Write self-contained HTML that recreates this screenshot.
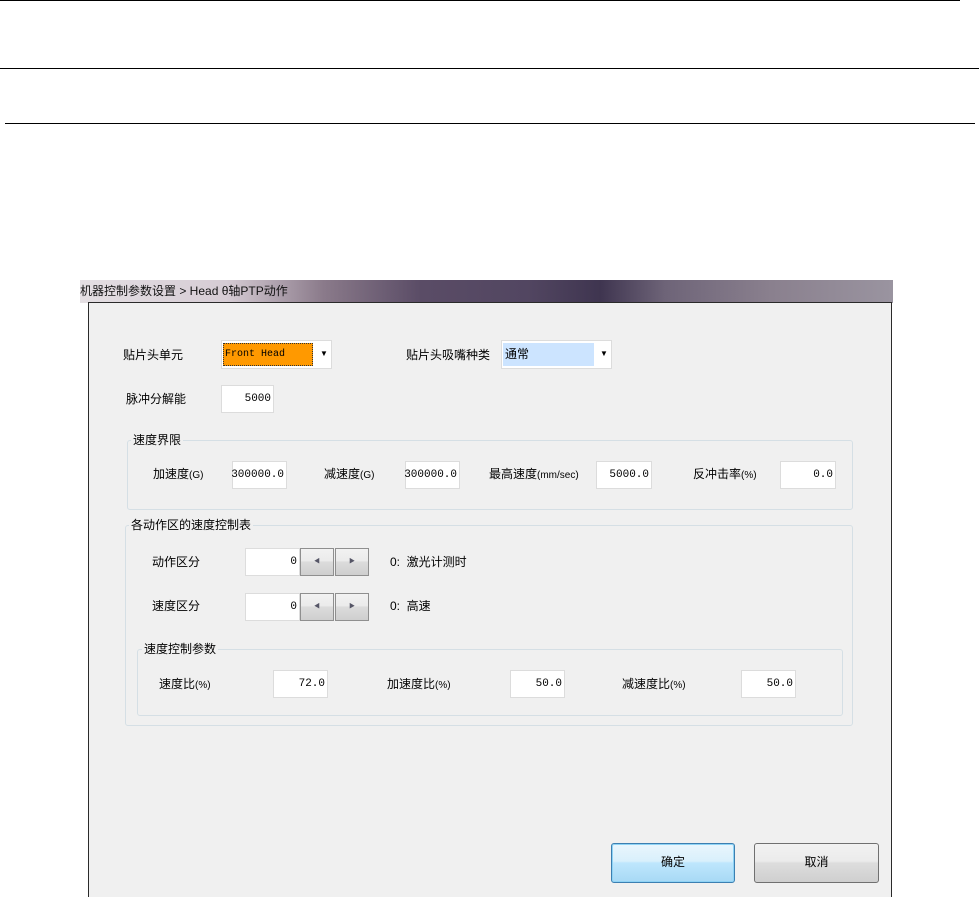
<!DOCTYPE html>
<html><head><meta charset="utf-8"><style>
*{margin:0;padding:0;box-sizing:border-box}
body{width:979px;height:897px;background:#fff;position:relative;overflow:hidden;font-family:"Liberation Sans","Noto Sans CJK SC",sans-serif;font-size:12px;color:#000}
.a{position:absolute}
.hl{position:absolute;height:1px;background:#000}
.t{position:absolute;white-space:nowrap;line-height:14px}
.s{font-size:10px}
.in{position:absolute;background:#fff;border:1px solid #dcdcdc;text-align:right;padding-right:2px;font-family:"Liberation Mono","Noto Sans CJK SC",monospace;font-size:11px;display:flex;align-items:center;justify-content:flex-end}
.grp{position:absolute;border:1px solid #d5dfe5;border-radius:3px}
.gl{position:absolute;background:#f0f0f0;padding:0 2px;line-height:14px;white-space:nowrap}
.sb{position:absolute;width:34px;height:28px;border:1px solid #8f8f8f;background:linear-gradient(#f2f2f2 0,#ebebeb 45%,#dcdcdc 50%,#cfcfcf 100%);font-size:6px;color:#556;text-align:center;line-height:26px}
.btn{position:absolute;border-radius:3px;text-align:center;line-height:37px;font-size:12px}
</style></head><body>
<div class="hl" style="left:0;top:0;width:960px"></div>
<div class="hl" style="left:0;top:68px;width:979px"></div>
<div class="hl" style="left:5px;top:123px;width:970px"></div>

<div class="a" style="left:80px;top:280px;width:813px;height:23px;background:linear-gradient(90deg,#e4dfe3 0,#d6ccd4 18%,#8a7a8a 30%,#5a4c66 42%,#524661 55%,#3f3550 64%,#6e6478 72%,#8a808e 85%,#9a94a0 100%)"></div>
<div class="t" style="left:80px;top:284px;color:#111;font-size:12px">机器控制参数设置 &gt; Head θ轴PTP动作</div>
<div class="a" style="left:88px;top:302px;width:804px;height:595px;background:#f0f0f0;border:1px solid #2a2a2a;border-bottom:none"></div>

<div class="t" style="left:123px;top:348px">贴片头单元</div>
<div class="a" style="left:221px;top:340px;width:111px;height:29px;background:#fff;border:1px solid #dcdcdc"></div>
<div class="a" style="left:223px;top:343px;width:90px;height:23px;background:#ff9900;border:1px dotted #333;font-family:'Liberation Mono',monospace;font-size:10px;line-height:21px;padding-left:1px">Front Head</div>
<div class="t" style="left:320px;top:347px;font-size:8px">▼</div>

<div class="t" style="left:406px;top:348px">贴片头吸嘴种类</div>
<div class="a" style="left:501px;top:340px;width:111px;height:29px;background:#fff;border:1px solid #dcdcdc"></div>
<div class="a" style="left:503px;top:343px;width:91px;height:23px;background:#cce4ff;line-height:23px;padding-left:2px">通常</div>
<div class="t" style="left:600px;top:347px;font-size:8px">▼</div>

<div class="t" style="left:126px;top:392px">脉冲分解能</div>
<div class="in" style="left:221px;top:385px;width:53px;height:28px">5000</div>

<div class="grp" style="left:127px;top:440px;width:726px;height:70px"></div>
<div class="gl" style="left:131px;top:433px">速度界限</div>
<div class="t" style="left:153px;top:467px">加速度<span class="s">(G)</span></div>
<div class="in" style="left:232px;top:461px;width:55px;height:28px">300000.0</div>
<div class="t" style="left:324px;top:467px">减速度<span class="s">(G)</span></div>
<div class="in" style="left:405px;top:461px;width:55px;height:28px">300000.0</div>
<div class="t" style="left:489px;top:467px">最高速度<span class="s">(mm/sec)</span></div>
<div class="in" style="left:596px;top:461px;width:56px;height:28px">5000.0</div>
<div class="t" style="left:693px;top:467px">反冲击率<span class="s">(%)</span></div>
<div class="in" style="left:780px;top:461px;width:56px;height:28px">0.0</div>

<div class="grp" style="left:125px;top:525px;width:728px;height:201px"></div>
<div class="gl" style="left:129px;top:518px">各动作区的速度控制表</div>
<div class="t" style="left:152px;top:555px">动作区分</div>
<div class="in" style="left:245px;top:548px;width:55px;height:28px;border-color:#ddd">0</div>
<div class="sb" style="left:300px;top:548px">◀</div>
<div class="sb" style="left:335px;top:548px">▶</div>
<div class="t" style="left:390px;top:555px">0:&nbsp; 激光计测时</div>
<div class="t" style="left:152px;top:599px">速度区分</div>
<div class="in" style="left:245px;top:593px;width:55px;height:28px">0</div>
<div class="sb" style="left:300px;top:593px">◀</div>
<div class="sb" style="left:335px;top:593px">▶</div>
<div class="t" style="left:390px;top:599px">0:&nbsp; 高速</div>

<div class="grp" style="left:137px;top:649px;width:706px;height:67px"></div>
<div class="gl" style="left:142px;top:642px">速度控制参数</div>
<div class="t" style="left:159px;top:677px">速度比<span class="s">(%)</span></div>
<div class="in" style="left:273px;top:670px;width:55px;height:28px">72.0</div>
<div class="t" style="left:387px;top:677px">加速度比<span class="s">(%)</span></div>
<div class="in" style="left:510px;top:670px;width:55px;height:28px">50.0</div>
<div class="t" style="left:622px;top:677px">减速度比<span class="s">(%)</span></div>
<div class="in" style="left:741px;top:670px;width:55px;height:28px">50.0</div>

<div class="btn" style="left:611px;top:843px;width:124px;height:40px;border:1px solid #3c7fb1;background:linear-gradient(#eaf6fd 0,#d9f0fc 45%,#bee6fd 50%,#a7d9f5 100%);box-shadow:inset 0 0 0 1px #8fd3f5">确定</div>
<div class="btn" style="left:754px;top:843px;width:125px;height:40px;border:1px solid #707070;background:linear-gradient(#f2f2f2 0,#ebebeb 45%,#dddddd 50%,#cfcfcf 100%)">取消</div>
</body></html>
